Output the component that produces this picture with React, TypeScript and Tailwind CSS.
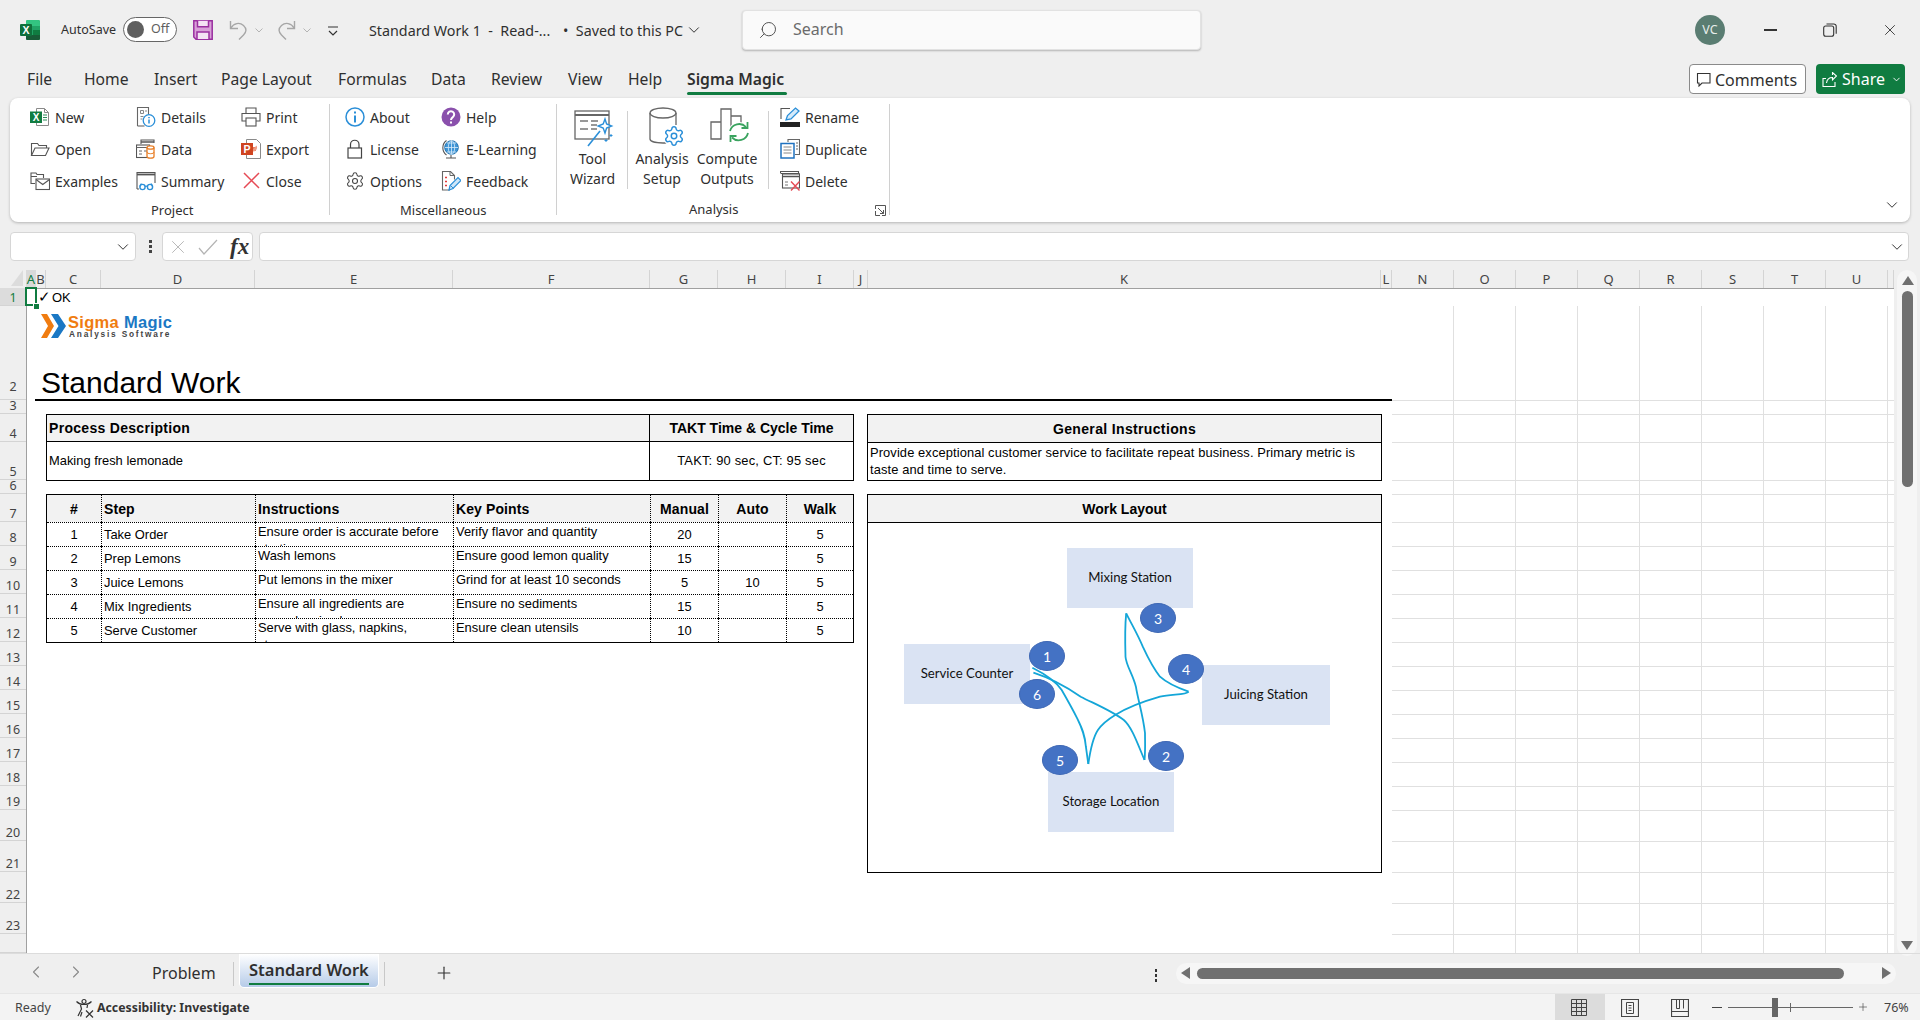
import { ReactNode } from "react";
import { ChevronDown, ChevronLeft, ChevronRight, Lock, Plus, Search, Settings, X } from "lucide-react";

const Svg = ({ children, size = 20, h }: { children: ReactNode; size?: number; h?: number }) => (
  <svg width={size} height={h ?? size} viewBox={`0 0 ${size} ${h ?? size}`} fill="none" className="shrink-0">
    {children}
  </svg>
);

const ExcelLogo = () => (
  <Svg>
    <rect x="6" y="0" width="14" height="20" rx="1.5" fill="#21a366" />
    <path d="M6 1.500A1.500 1.500 0 0 1 7.500 0h11A1.500 1.500 0 0 1 20 1.500V6H6z" fill="#33c481" />
    <path d="M13 10h7v5h-7z" fill="#107c41" />
    <path d="M6 15h14v3.500a1.500 1.500 0 0 1-1.500 1.500h-11A1.500 1.500 0 0 1 6 18.500z" fill="#185c37" />
    <rect x="0" y="4" width="12" height="12" rx="1" fill="#0f703b" />
    <text x="6" y="13.600" textAnchor="middle" fontSize="10.500" fontWeight="700" fill="#fff" fontFamily="Liberation Sans, sans-serif">X</text>
  </Svg>
);

const NewIcon = () => (
  <Svg>
    <path d="M6.500 1.500h8l4 4v13h-12z" fill="#fff" stroke="#8a8a8a" />
    <path d="M14.500 1.500v4h4" stroke="#8a8a8a" />
    <path d="M13 8h4M13 10.500h4M13 13h4" stroke="#2c8b5a" strokeWidth="1.200" />
    <rect x="0" y="4.500" width="12" height="11.500" fill="#107c41" />
    <text x="6" y="13.700" textAnchor="middle" fontSize="10" fontWeight="700" fill="#fff" fontFamily="Liberation Sans, sans-serif">X</text>
  </Svg>
);
const OpenIcon = () => (
  <Svg>
    <path d="M1.500 16.500v-12h6l1.500 2h7.500v2.500" stroke="#555" strokeWidth="1.100" />
    <path d="M1.500 16.500l3.500-7.500h14l-3.500 7.500z" stroke="#555" strokeWidth="1.100" />
  </Svg>
);
const ExamplesIcon = () => (
  <Svg>
    <path d="M5 12.500H1V2h5l1 1.500h6.500V7" stroke="#555" strokeWidth="1.100" />
    <path d="M1 5.500h6" stroke="#555" />
    <rect x="6" y="8" width="13.500" height="10.500" fill="#fff" stroke="#555" strokeWidth="1.100" />
    <path d="M6 8.500l6.750 5 6.750-5" stroke="#555" strokeWidth="1.100" />
  </Svg>
);
const DetailsIcon = () => (
  <Svg>
    <path d="M1.500 19V.5h11v7" stroke="#666" strokeWidth="1.100" />
    <path d="M1.500 19h7" stroke="#666" strokeWidth="1.100" />
    <path d="M4.500 3.500h3v3h-3zM9 4h2M4.500 9.500h3M4.500 12h2" stroke="#888" />
    <circle cx="13" cy="13.500" r="5.800" fill="#fff" stroke="#2b8fd8" strokeWidth="1.300" />
    <path d="M13 12.500v4M13 10v1.200" stroke="#2b8fd8" strokeWidth="1.500" />
  </Svg>
);
const DataIcon = () => (
  <Svg>
    <path d="M5 5V1h13v3" stroke="#555" strokeWidth="1.100" />
    <path d="M5 3h13" stroke="#555" strokeWidth="1.500" />
    <rect x="0.500" y="6" width="13" height="12.500" fill="#fff" stroke="#555" strokeWidth="1.100" />
    <path d="M0.500 8.500h13M3 12h3M3 15h3M8 12h3" stroke="#666" />
    <path d="M11 8.500v9c0 1 1.500 1.700 3.500 1.700S18 18.500 18 17.500v-9" fill="#fff" stroke="#e87d24" strokeWidth="1.300" />
    <ellipse cx="14.500" cy="8.500" rx="3.500" ry="1.700" fill="#fff" stroke="#e87d24" strokeWidth="1.300" />
    <path d="M11 13c0 1 1.500 1.700 3.500 1.700S18 14 18 13" stroke="#e87d24" />
  </Svg>
);
const SummaryIcon = () => (
  <Svg>
    <path d="M1 18V1.500h18V12" stroke="#555" strokeWidth="1.100" />
    <path d="M1 3.500h18" stroke="#555" strokeWidth="1.800" />
    <path d="M1 18h2" stroke="#555" />
    <circle cx="6.500" cy="16" r="2.600" stroke="#2b8fd8" strokeWidth="1.400" />
    <circle cx="14" cy="16" r="2.600" stroke="#2b8fd8" strokeWidth="1.400" />
    <path d="M9 15.500c1-.7 1.600-.7 2.500 0M3.900 15.500l1.500-3M16.600 15.500l-1.500-3" stroke="#2b8fd8" strokeWidth="1.200" />
  </Svg>
);
const PrintIcon = () => (
  <Svg>
    <path d="M5 6V1h10v5" stroke="#555" strokeWidth="1.100" />
    <path d="M5 14H1V6.500h18V14h-4" stroke="#555" strokeWidth="1.100" />
    <rect x="5" y="11" width="10" height="8" stroke="#555" strokeWidth="1.100" />
  </Svg>
);
const ExportIcon = () => (
  <Svg>
    <path d="M5.500.5h10l4 4v15h-14z" fill="#fff" stroke="#8a8a8a" />
    <path d="M15 5.500V8h-3.500A3.500 3.500 0 0 0 15 12V8.500" fill="#e97b5d" />
    <path d="M15.500 6.500a4 4 0 0 1-3.500 6v-2" fill="#ed9d85" />
    <rect x="0" y="4" width="12" height="12" fill="#cf4420" />
    <text x="6" y="13.500" textAnchor="middle" fontSize="10.500" fontWeight="700" fill="#fff" fontFamily="Liberation Sans, sans-serif">P</text>
  </Svg>
);
const CloseIcon = () => (
  <Svg>
    <path d="M3 2l15 15M18 2L3 17" stroke="#e64a55" strokeWidth="1.500" />
  </Svg>
);
const AboutIcon = () => (
  <Svg>
    <circle cx="10" cy="10" r="9" stroke="#2b8fd8" strokeWidth="1.500" />
    <path d="M10 8.500v7M10 4.500v2" stroke="#2b8fd8" strokeWidth="2" />
  </Svg>
);
const HelpIcon = () => (
  <Svg>
    <circle cx="10" cy="10" r="9.500" fill="#8a50ac" />
    <path d="M6.800 7.400a3.200 3.200 0 1 1 5 2.700c-1.200.8-1.800 1.400-1.800 2.800" stroke="#fff" strokeWidth="2" />
    <path d="M10 14.400v2.200" stroke="#fff" strokeWidth="2" />
  </Svg>
);
const LicenseIcon = () => (
  <Svg>
    <rect x="3" y="9" width="13.500" height="10" stroke="#444" strokeWidth="1.200" />
    <path d="M5.500 9V5.500a4.250 4.250 0 0 1 8.500 0V9" stroke="#444" strokeWidth="1.200" />
  </Svg>
);
const GlobeIcon = () => (
  <Svg>
    <circle cx="10.500" cy="8.500" r="6.800" fill="#3f95d6" stroke="#2273b0" />
    <path d="M4 8.500h13M10.500 1.700v13.500M6 4h9M6 13h9" stroke="#d8ecfa" strokeWidth=".8" />
    <ellipse cx="10.500" cy="8.500" rx="3.200" ry="6.800" stroke="#d8ecfa" strokeWidth=".8" />
    <path d="M5.500 1.500a9 9 0 0 0 0 14.500M10 16v3M5 19h10" stroke="#555" strokeWidth="1.100" />
  </Svg>
);
const FeedbackIcon = () => (
  <Svg>
    <path d="M9 19H1.500V.5h8l4 4v4" stroke="#666" strokeWidth="1.100" />
    <path d="M9 .5v4h4.500" stroke="#666" />
    <path d="M4 6.500h2M4 10.500h2M4 14.500h2" stroke="#e23a3a" strokeWidth="1.600" />
    <path d="M8 19l1-4.500 8-8 3 3-8 8z" fill="#cfe6f8" stroke="#2b8fd8" strokeWidth="1.200" />
    <path d="M9.500 14.500l3 3" stroke="#2b8fd8" />
  </Svg>
);
const WizardIcon = () => (
  <Svg size={42} h={38}>
    <rect x="1" y="1" width="34" height="28" stroke="#666" strokeWidth="1.300" />
    <path d="M1 5h34" stroke="#666" strokeWidth="2" />
    <path d="M6 11h8M6 19h8M17 11h7M17 15h6M17 19h6" stroke="#777" strokeWidth="1.300" />
    <path d="M14 36L26 21" stroke="#2b8fd8" strokeWidth="1.600" />
    <path d="M31 9l1.600 5 5 2-5 2-1.600 5-1.800-5-5-2 5-2z" fill="#fff" stroke="#2b8fd8" strokeWidth="1.400" />
    <path d="M37 24v3M35.500 25.500h3M32 29v3M30.500 30.500h3" stroke="#2b8fd8" />
  </Svg>
);
const SetupIcon = () => (
  <div className="relative w-[36px] h-[40px]">
    <Svg size={36} h={40}>
      <path d="M1 6v26c0 2.500 6 4 13 4 1.500 0 3-.1 4-.2M27 6v12" stroke="#666" strokeWidth="1.300" />
      <ellipse cx="14" cy="6" rx="13" ry="5" stroke="#666" strokeWidth="1.300" />
    </Svg>
    <Settings className="absolute left-[14px] top-[18px] text-[#2b8fd8] bg-white rounded-full" size={22} strokeWidth={1.600} />
  </div>
);
const OutputsIcon = () => (
  <Svg size={40} h={40}>
    <path d="M1 32V15h10v17zM11 32V2h10v29M21 9h10v10" stroke="#666" strokeWidth="1.300" />
    <circle cx="29" cy="26" r="11" fill="#fff" />
    <path d="M20 24a9.500 9.500 0 0 1 16-4" stroke="#3aa35f" strokeWidth="1.800" />
    <path d="M37.500 15v6h-6" stroke="#3aa35f" strokeWidth="1.800" />
    <path d="M38 26a9.500 9.500 0 0 1-16 4.500" stroke="#3aa35f" strokeWidth="1.800" />
    <path d="M20.500 35v-6h6" stroke="#3aa35f" strokeWidth="1.800" />
  </Svg>
);
const RenameIcon = () => (
  <Svg>
    <path d="M10 1.500H1V12" stroke="#555" strokeWidth="1.100" />
    <path d="M6 13l1.500-4.500 8-7.500 3.500 3-8 8z" fill="#d5eafa" stroke="#2b8fd8" strokeWidth="1.300" />
    <rect x="0" y="15" width="20" height="5" fill="#222" />
  </Svg>
);
const DuplicateIcon = () => (
  <Svg>
    <path d="M8 3V.5h11.500v15H15" stroke="#666" strokeWidth="1.100" />
    <path d="M16 4h2M16 7h2M16 10h2" stroke="#666" />
    <rect x="1" y="4.500" width="13" height="14.500" fill="#fff" stroke="#1f72c0" strokeWidth="1.500" />
    <path d="M3.500 8h8M3.500 11h8M3.500 14h8" stroke="#888" />
  </Svg>
);
const DeleteIcon = () => (
  <Svg>
    <path d="M0.500 2V.5h18v2M0.500 2.500h19" stroke="#555" strokeWidth="1.100" />
    <rect x="2.500" y="3" width="17" height="14" fill="#fff" stroke="#555" strokeWidth="1.100" />
    <path d="M2.500 5.500h17" stroke="#555" strokeWidth="1.500" />
    <path d="M5 11h3M5 14h3" stroke="#777" />
    <path d="M11 10.500l8.500 9M19.500 10.500l-8.500 9" stroke="#e64a55" strokeWidth="1.400" />
  </Svg>
);
const LauncherIcon = () => (
  <Svg size={11}>
    <path d="M.5 4V.5h10v10H7" stroke="#555" />
    <path d="M.5 6v4.500H5M3 3l5.500 5.500M8.500 5v3.500H5" stroke="#555" />
  </Svg>
);
const SaveIcon = () => (
  <Svg>
    <path d="M.8.8h18.400v18.400H3L.8 17z" fill="#d8a0d8" stroke="#9a2fa0" strokeWidth="1.500" />
    <path d="M4.500.8v6h11v-6" fill="#f4e3f4" stroke="#9a2fa0" strokeWidth="1.500" />
    <path d="M4 19v-7h12v7" fill="#f4e3f4" stroke="#9a2fa0" strokeWidth="1.500" />
  </Svg>
);
const UndoIcon = ({ flip }: { flip?: boolean }) => (
  <svg width="19" height="20" viewBox="0 0 19 20" fill="none" className={flip ? "shrink-0 -scale-x-100" : "shrink-0"}>
    <path d="M1.500 1v7.500H9" stroke="#a6a6a6" strokeWidth="1.400" />
    <path d="M1.800 8C5 3 10.500 2 14.500 5.500c3.500 3.200 3 6.500 0 9.500L10 19.500" stroke="#a6a6a6" strokeWidth="1.400" />
  </svg>
);
const SmallChevron = () => (
  <svg width="8" height="5" viewBox="0 0 8 5" fill="none" className="shrink-0">
    <path d="M.5.5L4 4 7.500.5" stroke="#b4b4b4" />
  </svg>
);
const RestoreIcon = () => (
  <Svg size={14}>
    <rect x=".7" y="3" width="10" height="10.300" rx="2" stroke="#333" strokeWidth="1.100" />
    <path d="M3.500 1h7a2.500 2.500 0 0 1 2.700 2.700v7" stroke="#333" strokeWidth="1.100" />
  </Svg>
);
const CommentIcon = () => (
  <Svg size={15}>
    <path d="M1.500 1.500h12.500v9.500H6l-3 3v-3H1.500z" stroke="#333" strokeWidth="1.100" />
  </Svg>
);
const ShareIcon = () => (
  <Svg size={15}>
    <path d="M4 6.500H1v8h12V10" stroke="#fff" strokeWidth="1.100" />
    <path d="M4.500 11c.5-3.500 3-5.500 6-5.500V8L14.500 4 10.500.5V3" stroke="#fff" strokeWidth="1.100" />
  </Svg>
);
const AccessIcon = () => (
  <Svg>
    <circle cx="9" cy="3.500" r="2" stroke="#333" strokeWidth="1.200" />
    <path d="M1.500 3.500C4 6 6 6.500 9 6.500S14 6 16.500 3.500M5.500 7l1 4-3.500 7M12.500 7l-.5 3" stroke="#333" strokeWidth="1.200" />
    <path d="M7 14l-1.500 4.500M11 12.500l7 7M18 12.500l-7 7" stroke="#333" strokeWidth="1.200" />
  </Svg>
);

const RibbonItem = ({ icon, label }: { icon: ReactNode; label: string }) => (
  <div className="flex items-center gap-[5px] h-[32px] whitespace-nowrap">
    {icon}
    <span>{label}</span>
  </div>
);

const Chevrons = () => (
  <svg width="25" height="24" viewBox="0 0 25 24" fill="none" className="shrink-0">
    <path d="M0 0h6l7 12-7 12H0l7-12z" fill="#f07c10" />
    <path d="M10 0h7l8 12-8 12h-7l7.500-12z" fill="#1b78c4" />
  </svg>
);

const rowHeaders = ["1", "2", "3", "4", "5", "6", "7", "8", "9", "10", "11", "12", "13", "14", "15", "16", "17", "18", "19", "20", "21", "22", "23", ""];
const colHeaders = ["A", "B", "C", "D", "E", "F", "G", "H", "I", "J", "K", "L", "N", "O", "P", "Q", "R", "S", "T", "U", ""];

const steps = [
  { n: "1", step: "Take Order", ins: ["Ensure order is accurate before", "starting"], key: "Verify flavor and quantity", manual: "20", auto: "", walk: "5" },
  { n: "2", step: "Prep Lemons", ins: ["Wash lemons"], key: "Ensure good lemon quality", manual: "15", auto: "", walk: "5" },
  { n: "3", step: "Juice Lemons", ins: ["Put lemons in the mixer"], key: "Grind for at least 10 seconds", manual: "5", auto: "10", walk: "5" },
  { n: "4", step: "Mix Ingredients", ins: ["Ensure all ingredients are", "properly mixed"], key: "Ensure no sediments", manual: "15", auto: "", walk: "5" },
  { n: "5", step: "Serve Customer", ins: ["Serve with glass, napkins,", "straws"], key: "Ensure clean utensils", manual: "10", auto: "", walk: "5" },
];

const gridXs = [1453, 1515, 1577, 1639, 1701, 1763, 1825, 1887];
const gridYs = [400, 414, 442, 480, 494, 522, 546, 570, 594, 618, 642, 666, 690, 714, 738, 762, 786, 810, 841, 872, 903, 934];

const hdCell = "border-l border-dotted border-black flex items-center justify-center font-bold pt-[1px] tracking-[0.1px]";
const numCell = "border-l border-t border-dotted border-black flex items-center justify-center";
const txtCell = "border-l border-t border-dotted border-black flex items-center pl-[2px] whitespace-nowrap";
const topCell = "border-l border-t border-dotted border-black pl-[2px] leading-[17px] overflow-hidden whitespace-nowrap";

export default function App() {
  return (
    <div className="relative w-[1920px] h-[1020px] overflow-hidden bg-[#efefef] text-[#2f2f2f] [font-family:Noto_Sans,sans-serif] text-[14px]">
      {/* title bar */}
      <div className="absolute left-[20px] top-[20px]"><ExcelLogo /></div>
      <span className="absolute left-[61px] top-[21px] text-[12.500px] leading-[18px]">AutoSave</span>
      <div className="absolute left-[123px] top-[17px] w-[54px] h-[25px] rounded-full border border-[#666] bg-white flex items-center">
        <span className="ml-[3px] w-[17px] h-[17px] rounded-full bg-[#5f5f5f]" />
        <span className="ml-[7px] text-[12.500px] text-[#5f5f5f]">Off</span>
      </div>
      <div className="absolute left-[193px] top-[20px]"><SaveIcon /></div>
      <div className="absolute left-[229px] top-[20px] flex items-center gap-[7px]"><UndoIcon /><SmallChevron /></div>
      <div className="absolute left-[277px] top-[20px] flex items-center gap-[7px]"><UndoIcon flip /><SmallChevron /></div>
      <svg width="12" height="10" viewBox="0 0 12 10" fill="none" className="absolute left-[327px] top-[26px]">
        <path d="M1 1h10M2 5l4 4 4-4" stroke="#333" strokeWidth="1.200" />
      </svg>
      <span className="absolute left-[369px] top-[21px] text-[14.300px] leading-[20px] whitespace-pre">Standard Work 1  -  Read-...</span>
      <span className="absolute left-[563px] top-[21px] text-[14.300px] leading-[20px] whitespace-pre">•  Saved to this PC</span>
      <ChevronDown className="absolute left-[685px] top-[21px]" size={18} strokeWidth={1.300} />
      <div className="absolute left-[742px] top-[10px] w-[459px] h-[40px] rounded-[4px] bg-[#fafafa] border border-[#e2e2e2] shadow-[0_1px_2px_rgba(0,0,0,0.25)] flex items-center">
        <Search className="ml-[15px] -scale-x-100 text-[#555]" size={20} strokeWidth={1.200} />
        <span className="ml-[15px] -mt-[2px] text-[16px] text-[#6b6b6b]">Search</span>
      </div>
      <div className="absolute left-[1695px] top-[15px] w-[30px] h-[30px] rounded-full bg-[#5a7d72] text-[#e6eeeb] text-[12.500px] flex items-center justify-center">VC</div>
      <div className="absolute left-[1764px] top-[29px] w-[13px] h-[1.500px] bg-[#333]" />
      <div className="absolute left-[1823px] top-[23px]"><RestoreIcon /></div>
      <X className="absolute left-[1881px] top-[21px] text-[#333]" size={18} strokeWidth={1.200} />

      {/* tabs */}
      <div className="absolute left-0 top-[67px] h-[24px] w-full text-[15.700px] leading-[24px]">
        <span className="absolute left-[27px]">File</span>
        <span className="absolute left-[84px]">Home</span>
        <span className="absolute left-[154px]">Insert</span>
        <span className="absolute left-[221px]">Page Layout</span>
        <span className="absolute left-[338px]">Formulas</span>
        <span className="absolute left-[431px]">Data</span>
        <span className="absolute left-[491px]">Review</span>
        <span className="absolute left-[568px]">View</span>
        <span className="absolute left-[628px]">Help</span>
        <span className="absolute left-[687px] font-semibold">Sigma Magic</span>
      </div>
      <div className="absolute left-[687px] top-[92px] w-[100px] h-[3px] rounded-full bg-[#107c41]" />
      <div className="absolute left-[1689px] top-[64px] w-[117px] h-[30px] rounded-[4px] border border-[#8a8a8a] bg-white flex items-center pl-[6px] gap-[4px] text-[16px]">
        <CommentIcon />
        <span className="pt-[1px]">Comments</span>
      </div>
      <div className="absolute left-[1816px] top-[64px] w-[89px] h-[30px] rounded-[4px] bg-[#107c41] flex items-center pl-[6px] gap-[5px] text-[16px] text-white">
        <ShareIcon />
        <span>Share</span>
        <ChevronDown className="ml-[1px]" size={11} strokeWidth={2} />
      </div>

      {/* ribbon */}
      <div className="absolute left-[10px] top-[98px] w-[1900px] h-[124px] rounded-[8px] bg-white shadow-[0_1px_3px_rgba(0,0,0,0.25)]" />
      <div className="absolute left-[30px] top-[101px] grid grid-cols-[106px_105px_auto]">
        <RibbonItem icon={<NewIcon />} label="New" />
        <RibbonItem icon={<DetailsIcon />} label="Details" />
        <RibbonItem icon={<PrintIcon />} label="Print" />
        <RibbonItem icon={<OpenIcon />} label="Open" />
        <RibbonItem icon={<DataIcon />} label="Data" />
        <RibbonItem icon={<ExportIcon />} label="Export" />
        <RibbonItem icon={<ExamplesIcon />} label="Examples" />
        <RibbonItem icon={<SummaryIcon />} label="Summary" />
        <RibbonItem icon={<CloseIcon />} label="Close" />
      </div>
      <span className="absolute left-[151px] top-[201px] text-[13px] leading-[18px]">Project</span>
      <div className="absolute left-[329px] top-[104px] w-px h-[111px] bg-[#d0d0d0]" />
      <div className="absolute left-[345px] top-[101px] grid grid-cols-[96px_auto]">
        <RibbonItem icon={<AboutIcon />} label="About" />
        <RibbonItem icon={<HelpIcon />} label="Help" />
        <RibbonItem icon={<LicenseIcon />} label="License" />
        <RibbonItem icon={<GlobeIcon />} label="E-Learning" />
        <RibbonItem icon={<Settings size={20} strokeWidth={1.300} className="text-[#444]" />} label="Options" />
        <RibbonItem icon={<FeedbackIcon />} label="Feedback" />
      </div>
      <span className="absolute left-[400px] top-[201px] text-[13px] leading-[18px]">Miscellaneous</span>
      <div className="absolute left-[556px] top-[104px] w-px h-[111px] bg-[#d0d0d0]" />
      <div className="absolute left-[574px] top-[110px]"><WizardIcon /></div>
      <div className="absolute left-[558px] top-[149px] w-[69px] text-center leading-[20px]">Tool<br />Wizard</div>
      <div className="absolute left-[627px] top-[111px] w-px h-[78px] bg-[#d0d0d0]" />
      <div className="absolute left-[649px] top-[107px]"><SetupIcon /></div>
      <div className="absolute left-[628px] top-[149px] w-[68px] text-center leading-[20px]">Analysis<br />Setup</div>
      <div className="absolute left-[710px] top-[107px]"><OutputsIcon /></div>
      <div className="absolute left-[692px] top-[149px] w-[70px] text-center leading-[20px]">Compute<br />Outputs</div>
      <div className="absolute left-[768px] top-[111px] w-px h-[78px] bg-[#d0d0d0]" />
      <div className="absolute left-[780px] top-[101px] flex flex-col">
        <RibbonItem icon={<RenameIcon />} label="Rename" />
        <RibbonItem icon={<DuplicateIcon />} label="Duplicate" />
        <RibbonItem icon={<DeleteIcon />} label="Delete" />
      </div>
      <span className="absolute left-[689px] top-[200px] text-[13px] leading-[18px]">Analysis</span>
      <div className="absolute left-[875px] top-[205px]"><LauncherIcon /></div>
      <div className="absolute left-[889px] top-[104px] w-px h-[111px] bg-[#d0d0d0]" />
      <ChevronDown className="absolute left-[1883px] top-[196px]" size={18} strokeWidth={1.300} />

      {/* formula bar */}
      <div className="absolute left-[10px] top-[232px] w-[126px] h-[29px] rounded-[4px] bg-white border border-[#d6d6d6]">
        <ChevronDown className="absolute right-[3px] top-[5px]" size={18} strokeWidth={1.300} />
      </div>
      <div className="absolute left-[149px] top-[240px] flex flex-col gap-[2px]">
        <span className="w-[3px] h-[3px] bg-[#444]" />
        <span className="w-[3px] h-[3px] bg-[#444]" />
        <span className="w-[3px] h-[3px] bg-[#444]" />
      </div>
      <div className="absolute left-[162px] top-[232px] w-[91px] h-[29px] rounded-[4px] bg-white border border-[#d6d6d6] flex items-center">
        <X className="ml-[4px] text-[#b4b4b4]" size={22} strokeWidth={1} />
        <svg width="20" height="16" viewBox="0 0 20 16" fill="none" className="ml-[9px]">
          <path d="M1 9l5 6L19 1" stroke="#b4b4b4" strokeWidth="1.200" />
        </svg>
        <span className="ml-[12px] [font-family:Liberation_Serif,serif] italic font-bold text-[23px] leading-[20px] text-[#333]">fx</span>
      </div>
      <div className="absolute left-[259px] top-[232px] w-[1650px] h-[29px] rounded-[4px] bg-white border border-[#d6d6d6]">
        <ChevronDown className="absolute right-[2px] top-[5px]" size={18} strokeWidth={1.300} />
      </div>

      {/* column and row headers */}
      <svg width="12" height="16" viewBox="0 0 12 16" className="absolute left-[11px] top-[270px]">
        <path d="M12 0v16H0z" fill="#dcdcdc" />
      </svg>
      <div className="absolute left-[26px] top-[270px] h-[18px] grid grid-cols-[10px_10px_55px_154px_198px_197px_68px_68px_68px_14px_513px_11px_repeat(8,62px)_6px] text-[13px] leading-[18px] text-[#444]">
        {colHeaders.map((c, i) => (
          <div key={i} className={i === 0 ? "flex items-center justify-center bg-[#d9d9d9] text-[#107c41]" : "flex items-center justify-center border-r border-[#d4d4d4]"}>{c}</div>
        ))}
      </div>
      <div className="absolute left-0 top-[288px] w-[26px] h-[665px] grid grid-rows-[18px_94px_14px_28px_38px_14px_28px_repeat(12,24px)_repeat(4,31px)_19px] text-[12.500px] leading-[14px] text-[#444]">
        {rowHeaders.map((r, i) => (
          <div key={i} className={`flex items-end justify-center overflow-hidden border-b border-[#d4d4d4] ${i === 0 ? "bg-[#dcdcdc] text-[#107c41]" : ""} ${i === 1 ? "pb-[5px]" : ""}`}>{r}</div>
        ))}
      </div>

      {/* sheet */}
      <div className="absolute left-[26px] top-[288px] w-[1868px] h-[665px] bg-white border-t border-l border-[#a0a0a0]" />
      {gridXs.map((x) => (
        <div key={x} className="absolute top-[306px] h-[647px] w-px bg-[#e0e0e0]" style={{ left: x }} />
      ))}
      {gridYs.map((y) => (
        <div key={y} className="absolute left-[1392px] w-[502px] h-px bg-[#e0e0e0]" style={{ top: y }} />
      ))}

      <div className="[font-family:Liberation_Sans,sans-serif] text-black text-[12.900px]">
        <div className="absolute left-[25px] top-[287px] w-[12px] h-[19px] border-2 border-[#107c41]" />
        <div className="absolute left-[33px] top-[303px] w-[5px] h-[5px] bg-[#107c41] border border-white box-content" />
        <span className="absolute left-[38px] top-[289px] leading-[16px] text-[15px]">✓</span>
        <span className="absolute left-[52px] top-[290px] leading-[15px] text-[13px]">OK</span>

        {/* logo */}
        <div className="absolute left-[41px] top-[314px]"><Chevrons /></div>
        <div className="absolute left-[68px] top-[313px] font-bold text-[16.500px] leading-[18px] tracking-[0.300px] whitespace-nowrap">
          <span className="text-[#f07c10]">Sigma</span>
          <span className="text-[#1b78c4]"> Magic</span>
        </div>
        <div className="absolute left-[69px] top-[329px] font-bold text-[8.300px] leading-[10px] tracking-[1.800px] text-[#444] whitespace-nowrap">Analysis Software</div>

        <div className="absolute left-[41px] top-[365px] text-[30px] leading-[36px] whitespace-nowrap">Standard Work</div>
        <div className="absolute left-[35px] top-[399px] w-[1357px] h-[2px] bg-black" />

        {/* process description */}
        <div className="absolute left-[46px] top-[414px] w-[808px] h-[67px] border border-black grid grid-cols-[602px_auto] grid-rows-[27px_38px]">
          <div className="bg-[#f2f2f2] border-b border-black flex items-center pl-[2px] font-bold text-[14px] tracking-[0.3px]">Process Description</div>
          <div className="bg-[#f2f2f2] border-b border-l border-black flex items-center justify-center font-bold text-[14px]">TAKT Time &amp; Cycle Time</div>
          <div className="flex items-center pl-[2px]">Making fresh lemonade</div>
          <div className="border-l border-black flex items-center justify-center tracking-[0.2px]">TAKT: 90 sec, CT: 95 sec</div>
        </div>

        {/* steps */}
        <div className="absolute left-[46px] top-[494px] w-[808px] h-[149px] border border-black grid grid-cols-[54px_154px_198px_197px_68px_68px_auto] grid-rows-[27px_repeat(5,24px)]">
          <div className="bg-[#f2f2f2] flex items-center justify-center font-bold text-[14px] pt-[1px]">#</div>
          <div className={`${hdCell} bg-[#f2f2f2] text-[14px] !justify-start pl-[2px]`}>Step</div>
          <div className={`${hdCell} bg-[#f2f2f2] text-[14px] !justify-start pl-[2px]`}>Instructions</div>
          <div className={`${hdCell} bg-[#f2f2f2] text-[14px] !justify-start pl-[2px]`}>Key Points</div>
          <div className={`${hdCell} bg-[#f2f2f2] text-[14px]`}>Manual</div>
          <div className={`${hdCell} bg-[#f2f2f2] text-[14px]`}>Auto</div>
          <div className={`${hdCell} bg-[#f2f2f2] text-[14px]`}>Walk</div>
          {steps.map((s) => (
            <div key={s.n} className="contents">
              <div className="border-t border-dotted border-black flex items-center justify-center">{s.n}</div>
              <div className={txtCell}>{s.step}</div>
              <div className={topCell}>{s.ins.map((l) => <div key={l}>{l}</div>)}</div>
              <div className={topCell}>{s.key}</div>
              <div className={numCell}>{s.manual}</div>
              <div className={numCell}>{s.auto}</div>
              <div className={numCell}>{s.walk}</div>
            </div>
          ))}
        </div>

        {/* general instructions */}
        <div className="absolute left-[867px] top-[414px] w-[515px] h-[67px] border border-black flex flex-col">
          <div className="h-[28px] bg-[#f2f2f2] border-b border-black flex items-center justify-center font-bold text-[14px] tracking-[0.35px] pt-[1px]">General Instructions</div>
          <div className="pl-[2px] pt-[1px] leading-[17px] tracking-[0.1px]">Provide exceptional customer service to facilitate repeat business. Primary metric is<br />taste and time to serve.</div>
        </div>

        {/* work layout */}
        <div className="absolute left-[867px] top-[494px] w-[515px] h-[379px] border border-black">
          <div className="h-[28px] bg-[#f2f2f2] border-b border-black flex items-center justify-center font-bold text-[14px] pt-[1px]">Work Layout</div>
        </div>

        <div className="font-[family-name:Lato] text-[13.200px] text-[#111]">
          <div className="absolute left-[1067px] top-[548px] w-[126px] h-[60px] bg-[#dae3f3] flex items-center justify-center">Mixing Station</div>
          <div className="absolute left-[904px] top-[644px] w-[126px] h-[60px] bg-[#dae3f3] flex items-center justify-center">Service Counter</div>
          <div className="absolute left-[1202px] top-[665px] w-[128px] h-[60px] bg-[#dae3f3] flex items-center justify-center">Juicing Station</div>
          <div className="absolute left-[1048px] top-[772px] w-[126px] h-[60px] bg-[#dae3f3] flex items-center justify-center">Storage Location</div>
        </div>

        <svg width="190" height="180" viewBox="1020 600 190 180" fill="none" className="absolute left-[1020px] top-[600px]">
          <g stroke="#14a6d8" strokeWidth="1.800">
            <path d="M1032.400 667.700C1045 674 1055 680 1061.700 690C1068 701 1072 708 1077.200 718.300C1082 728 1085 735 1085.900 746.700L1088.300 764" />
            <path d="M1033.400 672.700C1050 678 1068 688 1080.700 696.700C1095 704 1112 711 1123.800 720C1132 727 1138 745 1144.500 760" />
            <path d="M1144.500 760C1145.500 750 1145 742 1145 733C1143 715 1138 700 1135.900 686.700C1133 675 1126 665 1125.500 656.700C1125 640 1125 625 1126.200 613.300" />
            <path d="M1126.200 613.300C1132 625 1138 635 1142.800 646.700C1148 658 1153 668 1160 676.700C1168 684 1178 688 1188.600 691.700" />
            <path d="M1188.600 691.700C1186 695 1172 694 1160 696.700C1145 701 1128 707 1115.200 715C1107 720 1102 724 1097.900 730C1092 739 1090 752 1088.300 764" />
          </g>
        </svg>

        <div className="font-[family-name:Lato] text-[14px] pt-[1px] text-white">
          <div className="absolute left-[1029px] top-[641px] w-[36px] h-[30px] rounded-[50%] bg-[#4472c4] border border-[#3f68b4] flex items-center justify-center">1</div>
          <div className="absolute left-[1148px] top-[741px] w-[36px] h-[30px] rounded-[50%] bg-[#4472c4] border border-[#3f68b4] flex items-center justify-center">2</div>
          <div className="absolute left-[1140px] top-[603px] w-[36px] h-[30px] rounded-[50%] bg-[#4472c4] border border-[#3f68b4] flex items-center justify-center">3</div>
          <div className="absolute left-[1168px] top-[654px] w-[36px] h-[30px] rounded-[50%] bg-[#4472c4] border border-[#3f68b4] flex items-center justify-center">4</div>
          <div className="absolute left-[1042px] top-[745px] w-[36px] h-[30px] rounded-[50%] bg-[#4472c4] border border-[#3f68b4] flex items-center justify-center">5</div>
          <div className="absolute left-[1019px] top-[679px] w-[36px] h-[30px] rounded-[50%] bg-[#4472c4] border border-[#3f68b4] flex items-center justify-center">6</div>
        </div>
      </div>

      {/* vertical scrollbar */}
      <div className="absolute left-[1897px] top-[270px] w-[20px] h-[686px] rounded-full bg-[#f6f6f6]" />
      <svg width="12" height="9" viewBox="0 0 12 9" className="absolute left-[1902px] top-[276px]"><path d="M6 0l6 9H0z" fill="#707070" /></svg>
      <div className="absolute left-[1902px] top-[291px] w-[11px] h-[196px] rounded-full bg-[#707070]" />
      <svg width="12" height="9" viewBox="0 0 12 9" className="absolute left-[1901px] top-[941px]"><path d="M6 9L0 0h12z" fill="#707070" /></svg>

      {/* sheet tabs */}
      <div className="absolute left-0 top-[953px] w-full h-[40px] border-t border-[#dcdcdc]">
        <ChevronLeft className="absolute left-[26px] top-[8px] text-[#8a8a8a]" size={20} strokeWidth={1.300} />
        <ChevronRight className="absolute left-[66px] top-[8px] text-[#8a8a8a]" size={20} strokeWidth={1.300} />
        <span className="absolute left-[152px] top-[7px] text-[16px] leading-[24px]">Problem</span>
        <div className="absolute left-[233px] top-[8px] w-px h-[24px] bg-[#c8c8c8]" />
        <div className="absolute left-[239px] top-0 w-[140px] h-[34px] rounded-b-[5px] border-x border-b border-white bg-gradient-to-b from-white to-[#b6cbe8]">
          <span className="absolute left-[9px] top-[4px] font-semibold text-[16.500px] leading-[24px] whitespace-nowrap">Standard Work</span>
          <div className="absolute left-[9px] top-[29px] w-[120px] h-[2px] bg-[#107c41]" />
        </div>
        <div className="absolute left-[384px] top-[8px] w-px h-[24px] bg-[#c8c8c8]" />
        <Plus className="absolute left-[434px] top-[9px] text-[#333]" size={20} strokeWidth={1.400} />
        <div className="absolute left-[1155px] top-[15px] flex flex-col gap-[2px]">
          <span className="w-[2px] h-[3px] bg-[#333]" />
          <span className="w-[2px] h-[3px] bg-[#333]" />
          <span className="w-[2px] h-[3px] bg-[#333]" />
        </div>
        <div className="absolute left-[1176px] top-[9px] w-[720px] h-[21px] rounded-full bg-[#f6f6f6]" />
        <svg width="9" height="12" viewBox="0 0 9 12" className="absolute left-[1181px] top-[13px]"><path d="M0 6l9-6v12z" fill="#707070" /></svg>
        <div className="absolute left-[1197px] top-[14px] w-[647px] h-[11px] rounded-full bg-[#707070]" />
        <svg width="9" height="12" viewBox="0 0 9 12" className="absolute left-[1882px] top-[13px]"><path d="M9 6L0 0v12z" fill="#707070" /></svg>
      </div>

      {/* status bar */}
      <div className="absolute left-0 top-[993px] w-full h-[27px] bg-[#f3f3f3] border-t border-[#e6e6e6] text-[12.500px] leading-[27px]">
        <span className="absolute left-[15px] text-[#444]">Ready</span>
        <div className="absolute left-[75px] top-[4px]"><AccessIcon /></div>
        <span className="absolute left-[97px] font-bold text-[12.300px] text-[#333] whitespace-nowrap">Accessibility: Investigate</span>
        <div className="absolute left-[1555px] top-0 w-[50px] h-[27px] bg-[#dcdcdc]" />
        <svg width="16" height="17" viewBox="0 0 16 17" fill="none" className="absolute left-[1571px] top-[5px]">
          <path d="M.5.5h15v16H.5zM.5 4.500h15M.5 8.500h15M.5 12.500h15M5.500.5v16M10.500.5v16" stroke="#444" />
        </svg>
        <svg width="18" height="18" viewBox="0 0 18 18" fill="none" className="absolute left-[1621px] top-[5px]">
          <path d="M.5.5h17v17H.5z" stroke="#444" strokeWidth="1.200" />
          <path d="M5.500 3.500h7v11h-7zM7.500 6.500h3M7.500 9h3M7.500 11.500h3" stroke="#444" />
        </svg>
        <svg width="18" height="18" viewBox="0 0 18 18" fill="none" className="absolute left-[1671px] top-[5px]">
          <path d="M.5.5h17v17H.5z" stroke="#444" strokeWidth="1.200" />
          <path d="M5.500.5v9h3v-9M8.500.5v9M12.500.5v9" stroke="#444" />
          <path d="M.5 12.500h17" stroke="#444" />
        </svg>
        <div className="absolute left-[1712px] top-[13px] w-[10px] h-px bg-[#444]" />
        <div className="absolute left-[1728px] top-[13px] w-[125px] h-px bg-[#666]" />
        <div className="absolute left-[1790px] top-[9px] w-px h-[9px] bg-[#666]" />
        <div className="absolute left-[1772px] top-[4px] w-[6px] h-[19px] bg-[#666]" />
        <Plus className="absolute left-[1857px] top-[7px] text-[#444]" size={12} strokeWidth={1.300} />
        <span className="absolute left-[1884px] text-[#444]">76%</span>
      </div>
    </div>
  );
}
